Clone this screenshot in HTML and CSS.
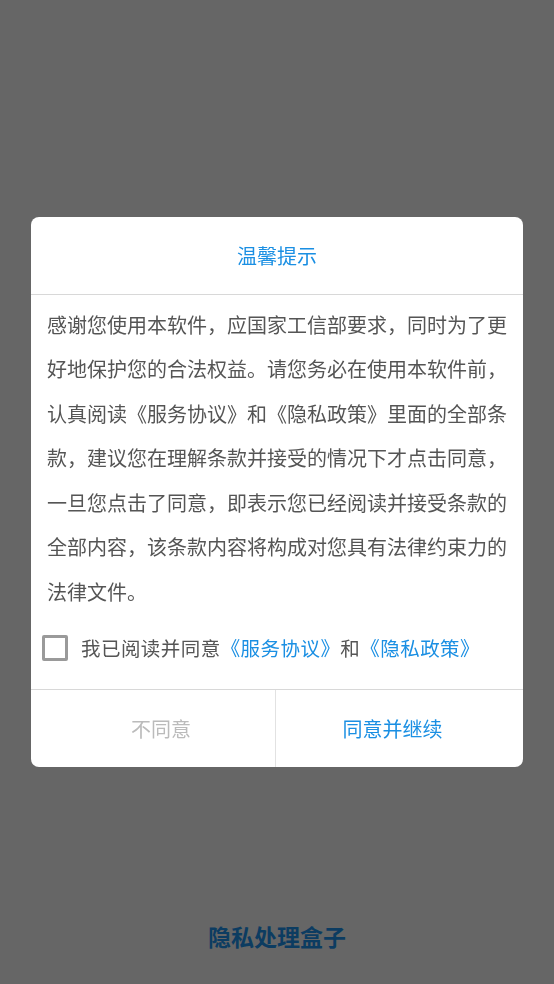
FILE: index.html
```html
<html lang="zh-CN">
<head>
    <meta charset="UTF-8">
    <meta name="viewport" content="width=device-width, initial-scale=1.0">
    <title>隐私处理盒子</title>
    <link rel="stylesheet" href="styles.css">
</head>
<body>

    <div id="page">
        <h1 class="app-name">隐私处理盒子</h1>
    </div>

    <div id="mask">
        <div class="dialog">
            <div class="dialog-title">温馨提示</div>
            <div class="dialog-body">
                <p>感谢您使用本软件，应国家工信部要求，同时为了更好地保护您的合法权益。请您务必在使用本软件前，认真阅读《服务协议》和《隐私政策》里面的全部条款，建议您在理解条款并接受的情况下才点击同意，一旦您点击了同意，即表示您已经阅读并接受条款的全部内容，该条款内容将构成对您具有法律约束力的法律文件。</p>
                <label class="agree">
                    <span class="box"></span>
                    <span>我已阅读并同意<a class="link">《服务协议》</a>和<a class="link">《隐私政策》</a></span>
                </label>
            </div>
            <div class="dialog-buttons">
                <div class="btn cancel">不同意</div>
                <div class="btn ok">同意并继续</div>
            </div>
        </div>
    </div>

</body>
</html>
```

FILE: styles.css
```css
* {
    box-sizing: border-box;
    margin: 0;
    padding: 0;
}
body {
    background-color: white;
    font-family: "Noto Sans CJK SC", "Noto Sans", sans-serif;
}
#page {
    height: 984px;
    display: flex;
    flex-direction: column;
    justify-content: flex-end;
    align-items: center;
    padding-bottom: 28px;
}
.app-name {
    font-size: 23px;
    font-weight: bold;
    color: #1f97f2;
    line-height: 40px;
}
#mask {
    position: fixed;
    top: 0;
    left: 0;
    right: 0;
    bottom: 0;
    background-color: rgba(0, 0, 0, 0.6);
    display: flex;
    justify-content: center;
    align-items: center;
}
.dialog {
    width: 492px;
    background-color: white;
    border-radius: 8px;
    overflow: hidden;
}
.dialog-title {
    height: 78px;
    line-height: 78px;
    text-align: center;
    font-size: 20px;
    color: #1a8fe3;
    border-bottom: 1px solid #d8d8d8;
}
.dialog-body {
    padding: 8px 16px 0 16px;
}
.dialog-body p {
    font-size: 20px;
    line-height: 44.5px;
    color: #555;
    text-align: justify;
}
.agree {
    display: flex;
    align-items: center;
    height: 75px;
    padding-bottom: 8px;
    margin-left: -5px;
    font-size: 19.5px;
    letter-spacing: 0.45px;
    color: #555;
}
.box {
    width: 26px;
    height: 26px;
    border: 3px solid #9a9a9a;
    border-radius: 2px;
    margin-right: 13px;
}
.link {
    color: #1a8fe3;
}
.dialog-buttons {
    display: flex;
    height: 78px;
    border-top: 1px solid #d8d8d8;
}
.btn {
    display: flex;
    justify-content: center;
    align-items: center;
    font-size: 20px;
}
.cancel {
    width: 245px;
    color: #bbb;
    border-right: 1px solid #e2e2e2;
    padding-left: 16px;
}
.ok {
    flex: 1;
    color: #1a8fe3;
    padding-right: 14px;
}
```
